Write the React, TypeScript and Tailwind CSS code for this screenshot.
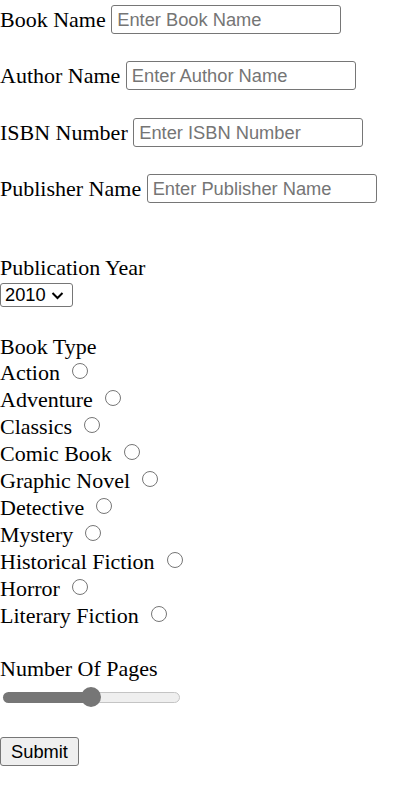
import React from "react";

const serif = "font-['Liberation_Serif','Times_New_Roman',serif]";
const sans = "font-['Liberation_Sans',Arial,sans-serif]";

function TextRow({ label, placeholder, className }: { label: string; placeholder: string; className: string }) {
  return (
    <div className={`flex items-center gap-[5.5px] h-[29px] ${className}`}>
      <span className="leading-[25px] whitespace-nowrap">{label}</span>
      <input
        type="text"
        placeholder={placeholder}
        className={`${sans} h-[29px] w-[230px] shrink-0 rounded-[3px] border border-[#767676] bg-white pl-[5px] text-[18.3px] text-black outline-none placeholder:text-[#757575]`}
      />
    </div>
  );
}

const types = [
  "Action",
  "Adventure",
  "Classics",
  "Comic Book",
  "Graphic Novel",
  "Detective",
  "Mystery",
  "Historical Fiction",
  "Horror",
  "Literary Fiction",
];

export default function App() {
  return (
    <div className={`${serif} text-[22px] leading-[25px] text-black bg-white w-[410px] h-[795px] overflow-hidden`}>
      <div className="flex flex-col">
        <TextRow label="Book Name" placeholder="Enter Book Name" className="mt-[5px]" />
        <TextRow label="Author Name" placeholder="Enter Author Name" className="mt-[27px]" />
        <TextRow label="ISBN Number" placeholder="Enter ISBN Number" className="mt-[28px]" />
        <TextRow label="Publisher Name" placeholder="Enter Publisher Name" className="mt-[27px]" />

        <div className="mt-[52px] h-[25px]">Publication Year</div>
        <div className="mt-[3px] flex">
          <div
            className={`${sans} flex h-[24px] w-[73px] items-center rounded-[3px] border border-[#767676] bg-white pl-[4px] text-[18.3px] leading-none`}
          >
            <span>2010</span>
            <svg width="13" height="9" viewBox="0 0 13 9" className="ml-[5px]">
              <path d="M1.5 2 L6.5 7 L11.5 2" fill="none" stroke="#000" strokeWidth="2" />
            </svg>
          </div>
        </div>

        <div className="mt-[27px] h-[25px]">Book Type</div>
        <div className="flex flex-col">
          {types.map((t) => (
            <div key={t} className="h-[27px] leading-[27px] whitespace-nowrap">
              <span>{t}</span>
              <span className="inline-block align-baseline ml-[12px] mb-[1px] h-[16px] w-[16px] rounded-full border-[1.5px] border-[#767676] bg-white" />
            </div>
          ))}
        </div>

        <div className="mt-[27px] h-[25px]">Number Of Pages</div>
        <div className="mt-[6px] ml-[3px] relative h-[20px] w-[177px] flex items-center">
          <div className="h-[11px] w-[88px] rounded-l-full bg-[#767676]" />
          <div className="h-[11px] flex-1 rounded-r-full border border-[#c4c4c4] bg-[#efefef]" />
          <div className="absolute left-[78px] top-0 h-[20px] w-[20px] rounded-full bg-[#767676]" />
        </div>

        <div className="mt-[30px] flex">
          <button
            className={`${sans} h-[29px] w-[79px] rounded-[3px] border border-[#767676] bg-[#efefef] text-[18.3px] text-black`}
          >
            Submit
          </button>
        </div>
      </div>
    </div>
  );
}
